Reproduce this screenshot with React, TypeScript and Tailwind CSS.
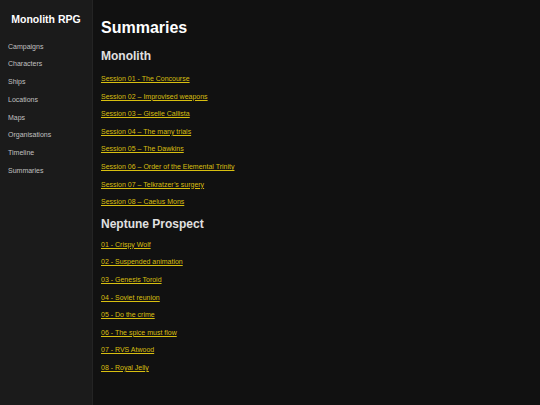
import React from 'react';

const nav = ['Campaigns', 'Characters', 'Ships', 'Locations', 'Maps', 'Organisations', 'Timeline', 'Summaries'];

const groups: { title: string; items: string[] }[] = [
  {
    title: 'Monolith',
    items: [
      'Session 01 - The Concourse',
      'Session 02 – Improvised weapons',
      'Session 03 – Giselle Callista',
      'Session 04 – The many trials',
      'Session 05 – The Dawkins',
      'Session 06 – Order of the Elemental Trinity',
      'Session 07 – Telkratzer’s surgery',
      'Session 08 – Caelus Mons',
    ],
  },
  {
    title: 'Neptune Prospect',
    items: [
      '01 - Crispy Wolf',
      '02 - Suspended animation',
      '03 - Genesis Toroid',
      '04 - Soviet reunion',
      '05 - Do the crime',
      '06 - The spice must flow',
      '07 - RVS Atwood',
      '08 - Royal Jelly',
    ],
  },
];

export default function App(): React.ReactElement {
  return (
    <div
      className="flex h-[405px] w-[540px] bg-[#111111] text-[#dddddd]"
      style={{ fontFamily: '"Liberation Sans", Arial, sans-serif' }}
    >
      {/* sidebar */}
      <aside className="w-[93px] shrink-0 bg-[#1b1b1b] border-r border-[#242424]">
        <div className="pt-[12px] text-center text-[10.5px] font-bold text-white">Monolith RPG</div>
        <nav className="mt-[10px] flex flex-col pl-[8px]">
          {nav.map((item) => (
            <a key={item} className="h-[17.7px] text-[7px] leading-[17.7px] text-[#c0c0c0]">
              {item}
            </a>
          ))}
        </nav>
      </aside>

      {/* main */}
      <main className="flex-1 pl-[8px] pt-[18px]">
        <h1 className="text-[16px] font-bold leading-[20px] text-white">Summaries</h1>
        {groups.map((g, gi) => (
          <section key={g.title} className={gi === 0 ? 'mt-[10px]' : 'mt-[5px]'}>
            <h2 className="text-[12px] font-bold leading-[16px] text-[#e0e0e0]">{g.title}</h2>
            <ul className={gi === 0 ? 'mt-[6px] flex flex-col' : 'mt-[4px] flex flex-col'}>
              {g.items.map((item) => (
                <li key={item} className="h-[17.6px] text-[7px] leading-[17.6px]">
                  <a className="text-[#d8bf10] underline underline-offset-[1px]">{item}</a>
                </li>
              ))}
            </ul>
          </section>
        ))}
      </main>
    </div>
  );
}
